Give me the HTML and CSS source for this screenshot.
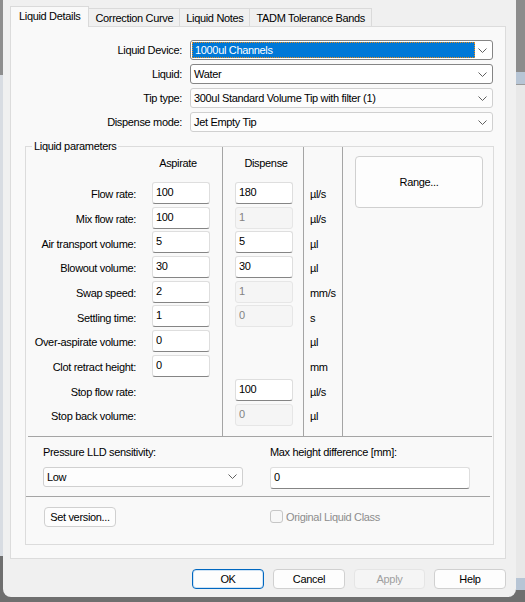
FILE: index.html
```html
<!DOCTYPE html>
<html lang="en">

<head>
    <meta charset="UTF-8">
    <meta name="viewport" content="width=device-width, initial-scale=1">
    <title>Liquid Class</title>
    <link rel="stylesheet" href="styles.css">
</head>

<body>
    <div class="screen">
        <div class="edge-left"></div>

        <div class="dialog">
            <div class="tabs">
                <div class="tab active">Liquid Details</div>
                <div class="tab">Correction Curve</div>
                <div class="tab">Liquid Notes</div>
                <div class="tab">TADM Tolerance Bands</div>
            </div>

            <div class="panel">
                <div class="form-top">
                    <label>Liquid Device:</label>
                    <div class="combo dark">
                        <span class="selected">1000ul Channels</span>
                        <svg class="chevron" width="9" height="5" viewBox="0 0 9 5"><path d="M0.5 0.5 L4.5 4.5 L8.5 0.5" /></svg>
                    </div>

                    <label>Liquid:</label>
                    <div class="combo dark">
                        <span>Water</span>
                        <svg class="chevron" width="9" height="5" viewBox="0 0 9 5"><path d="M0.5 0.5 L4.5 4.5 L8.5 0.5" /></svg>
                    </div>

                    <label>Tip type:</label>
                    <div class="combo">
                        <span>300ul Standard Volume Tip with filter (1)</span>
                        <svg class="chevron" width="9" height="5" viewBox="0 0 9 5"><path d="M0.5 0.5 L4.5 4.5 L8.5 0.5" /></svg>
                    </div>

                    <label>Dispense mode:</label>
                    <div class="combo">
                        <span>Jet Empty Tip</span>
                        <svg class="chevron" width="9" height="5" viewBox="0 0 9 5"><path d="M0.5 0.5 L4.5 4.5 L8.5 0.5" /></svg>
                    </div>
                </div>

                <div class="group">
                    <span class="group-title">Liquid parameters</span>

                    <div class="params">
                        <div class="vline line-1"></div>
                        <div class="vline line-2"></div>
                        <div class="vline line-3"></div>
                        <button class="range-btn">Range...</button>

                        <div class="c-label"></div>
                        <div class="c-asp head head-asp">Aspirate</div>
                        <div class="c-disp head head-disp">Dispense</div>

                        <div class="c-label">Flow rate:</div>
                        <input class="c-asp edit" type="text" value="100">
                        <input class="c-disp edit" type="text" value="180">
                        <div class="c-unit">µl/s</div>

                        <div class="c-label">Mix flow rate:</div>
                        <input class="c-asp edit" type="text" value="100">
                        <input class="c-disp edit" type="text" value="1" disabled>
                        <div class="c-unit">µl/s</div>

                        <div class="c-label">Air transport volume:</div>
                        <input class="c-asp edit" type="text" value="5">
                        <input class="c-disp edit" type="text" value="5">
                        <div class="c-unit">µl</div>

                        <div class="c-label">Blowout volume:</div>
                        <input class="c-asp edit" type="text" value="30">
                        <input class="c-disp edit" type="text" value="30">
                        <div class="c-unit">µl</div>

                        <div class="c-label">Swap speed:</div>
                        <input class="c-asp edit" type="text" value="2">
                        <input class="c-disp edit" type="text" value="1" disabled>
                        <div class="c-unit">mm/s</div>

                        <div class="c-label">Settling time:</div>
                        <input class="c-asp edit" type="text" value="1">
                        <input class="c-disp edit" type="text" value="0" disabled>
                        <div class="c-unit">s</div>

                        <div class="c-label">Over-aspirate volume:</div>
                        <input class="c-asp edit" type="text" value="0">
                        <div class="c-unit">µl</div>

                        <div class="c-label">Clot retract height:</div>
                        <input class="c-asp edit" type="text" value="0">
                        <div class="c-unit">mm</div>

                        <div class="c-label">Stop flow rate:</div>
                        <input class="c-disp edit" type="text" value="100">
                        <div class="c-unit">µl/s</div>

                        <div class="c-label">Stop back volume:</div>
                        <input class="c-disp edit" type="text" value="0" disabled>
                        <div class="c-unit">µl</div>
                    </div>

                    <div class="sep"></div>

                    <div class="lld">
                        <label>Pressure LLD sensitivity:</label>
                        <label>Max height difference [mm]:</label>
                        <div class="combo low">
                            <span>Low</span>
                            <svg class="chevron" width="9" height="5" viewBox="0 0 9 5"><path d="M0.5 0.5 L4.5 4.5 L8.5 0.5" /></svg>
                        </div>
                        <input class="edit wide" type="text" value="0">
                    </div>

                    <div class="sep short"></div>

                    <div class="version">
                        <button class="btn">Set version...</button>
                        <div class="check disabled">
                            <span class="box"></span>
                            <span>Original Liquid Class</span>
                        </div>
                    </div>
                </div>
            </div>

            <div class="buttons">
                <button class="btn default">OK</button>
                <button class="btn">Cancel</button>
                <button class="btn apply" disabled>Apply</button>
                <button class="btn">Help</button>
            </div>
        </div>

        <div class="edge-right"></div>
    </div>
</body>

</html>
```

FILE: styles.css
```css
* {
    box-sizing: border-box;
}

body {
    margin: 0;
    background-color: #6f6f6f;
    font-family: "Liberation Sans", Arial, sans-serif;
    font-size: 11px;
    letter-spacing: -0.33px;
    color: #000;
}

input,
button {
    font: inherit;
    letter-spacing: inherit;
}

.screen {
    display: flex;
    height: 602px;
}

.edge-left {
    width: 3px;
    height: 556px;
    background: linear-gradient(#8e8e8e 0 75px, #d8dce2 75px);
}

.edge-right {
    width: 9px;
    height: 590px;
    background: linear-gradient(#8c8c8c 0 72px, #b7c5d5 72px 84px, #9a9a9a 84px 85px, #e8e8e8 85px 578px, #b7c5d5 578px);
}

.dialog {
    width: 513px;
    height: 597px;
    padding: 6px 10px 0 7px;
    background-color: #f0f0f0;
    border-radius: 0 0 8px 8px;
}

/* tabs */
.tabs {
    display: flex;
    align-items: flex-end;
    height: 20px;
    position: relative;
    z-index: 1;
}

.tab {
    height: 18px;
    padding: 0 6px;
    margin-left: -1px;
    line-height: 18px;
    background-color: #f0f0f0;
    border: 1px solid #dadada;
    border-bottom: none;
}

.tab.active {
    height: 21px;
    margin-left: 0;
    margin-bottom: -1px;
    padding: 0 8px;
    line-height: 18px;
    background-color: #f9f9f9;
}

.panel {
    height: 533px;
    padding-top: 13px;
    background-color: #f9f9f9;
    border: 1px solid #dcdcdc;
}

/* top combos */
.form-top {
    display: grid;
    grid-template-columns: 171px 303px;
    grid-auto-rows: 20px;
    column-gap: 8px;
    row-gap: 4px;
    align-items: center;
}

.form-top label {
    text-align: right;
}

.combo {
    height: 20px;
    display: flex;
    align-items: center;
    justify-content: space-between;
    padding: 0 5px 0 3px;
    background-color: #fdfdfd;
    border: 1px solid #d0d0d0;
    border-radius: 3px;
}

.combo.dark {
    background-color: #fff;
    border-color: #858585;
}

.combo .selected {
    width: 283px;
    height: 16px;
    margin-left: -2px;
    padding-left: 2px;
    line-height: 14px;
    color: #fff;
    background-color: #0078d7;
    border: 1px dotted #e98b17;
}

.chevron {
    flex-shrink: 0;
    fill: none;
    stroke: #606060;
    stroke-width: 1;
}

/* group box */
.group {
    position: relative;
    width: 469px;
    margin: 14px 0 0 14px;
    border: 1px solid #dcdcdc;
}

.group-title {
    position: absolute;
    top: -7px;
    left: 6px;
    padding: 0 2px;
    line-height: 13px;
    background-color: #f9f9f9;
}

.params {
    display: grid;
    grid-template-columns: 117px 79px 1px 80px 1px 38px 1px 1fr;
    grid-template-rows: 35px repeat(10, 24.67px) 7px;
    align-items: center;
}

.vline {
    grid-row: 1 / -1;
    align-self: stretch;
    background-color: #a5a5a5;
}

.line-1 { grid-column: 3; }
.line-2 { grid-column: 5; }
.line-3 { grid-column: 7; }

.c-label {
    grid-column: 1;
    padding-right: 7px;
    text-align: right;
}

.c-asp {
    grid-column: 2;
    margin-left: 9px;
}

.c-disp {
    grid-column: 4;
    margin-left: 12px;
}

.c-unit {
    grid-column: 6;
    padding-left: 6px;
}

.head {
    width: 58px;
    align-self: start;
    padding-top: 10px;
    text-align: center;
}

.head-asp { margin-left: 6px; }
.head-disp { margin-left: 14px; }

.edit {
    width: 58px;
    height: 22px;
    align-self: start;
    padding: 0 3px 2px;
    color: #000;
    background-color: #fff;
    border: 1px solid #dedede;
    border-bottom-color: #858585;
    border-radius: 3px;
    outline: none;
}

.edit:disabled {
    color: #838383;
    background-color: #f5f5f5;
    border-color: #e6e6e6;
}

.range-btn {
    grid-column: 8;
    grid-row: 1 / 4;
    align-self: start;
    width: 128px;
    height: 52px;
    margin: 9px 0 0 12px;
    color: #000;
    background-color: #fdfdfd;
    border: 1px solid #d0d0d0;
    border-radius: 4px;
}

.sep {
    height: 1px;
    margin: 0 1px 0 2px;
    background-color: #a5a5a5;
}

.sep.short {
    margin: 0 3px 0 0;
}

.lld {
    display: grid;
    grid-template-columns: 227px 200px;
    row-gap: 8px;
    padding: 9px 0 7px 17px;
}

.lld label {
    line-height: 13px;
}

.combo.low {
    width: 200px;
    background-color: #fdfdfd;
}

.edit.wide {
    width: 200px;
}

.version {
    display: grid;
    grid-template-columns: 226px auto;
    align-items: center;
    padding: 10px 0 17px 18px;
}

.check {
    display: flex;
    align-items: center;
    gap: 3px;
}

.check.disabled {
    color: #8d8d8d;
}

.check .box {
    width: 13px;
    height: 13px;
    background-color: #f7f7f7;
    border: 1px solid #c6c6c6;
    border-radius: 3px;
}

/* buttons */
.btn {
    width: 72px;
    height: 20px;
    padding: 0;
    color: #000;
    background-color: #fdfdfd;
    border: 1px solid #d0d0d0;
    border-radius: 4px;
}

.btn.default {
    border-color: #0067c0;
    box-shadow: inset 0 0 0 1px #cfe3f5;
}

.btn.apply {
    width: 71px;
    color: #a0a0a0;
    background-color: #f5f5f5;
    border-color: #e5e5e5;
}

.buttons {
    display: flex;
    justify-content: flex-end;
    gap: 9px;
    margin-top: 10px;
}
```
